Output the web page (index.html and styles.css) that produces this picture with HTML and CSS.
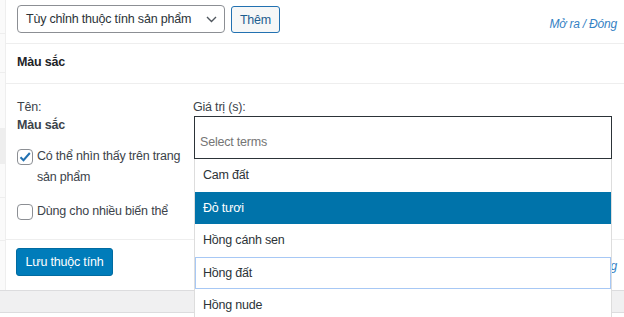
FILE: index.html
```html
<!DOCTYPE html>
<html lang="vi">
<head>
  <meta charset="UTF-8">
  <title>Thuộc tính sản phẩm</title>
  <link rel="stylesheet" href="styles.css">
</head>
<body>

<div class="meta">
  <ul class="tabs">
    <li style="height:33px"></li>
    <li style="height:38px"></li>
    <li style="height:55px"></li>
    <li class="active" style="height:34px"></li>
    <li style="height:33px"></li>
    <li style="height:42px"></li>
  </ul>

  <div class="panel">
    <div class="toolbar">
      <div class="fake-select">
        <span>Tùy chỉnh thuộc tính sản phẩm</span>
        <svg width="11" height="7" viewBox="0 0 11 7"><path d="M1 1l4.5 4.5L10 1" fill="none" stroke="#50575e" stroke-width="1.4"/></svg>
      </div>
      <button class="btn">Thêm</button>
      <a class="toggle" href="#">Mở ra / Đóng</a>
    </div>

    <div class="attr">
      <h3 class="attr-head">Màu sắc</h3>
      <div class="attr-body">
        <div class="col-name">
          <div class="label">Tên:</div>
          <div class="name">Màu sắc</div>
          <label class="opt">
            <span class="check checked"><svg width="14" height="14" viewBox="0 0 14 14"><path d="M2.5 7.2l3 3L11.8 3" fill="none" stroke="#2271b1" stroke-width="2"/></svg></span>
            <span>Có thể nhìn thấy trên trang sản phẩm</span>
          </label>
          <label class="opt">
            <span class="check"></span>
            <span>Dùng cho nhiều biến thể</span>
          </label>
        </div>
        <div class="col-values">
          <div class="label">Giá trị (s):</div>
          <div class="terms">
            <div class="terms-box">Select terms</div>
            <ul class="dropdown">
              <li>Cam đất</li>
              <li class="hl">Đỏ tươi</li>
              <li>Hồng cánh sen</li>
              <li class="focus">Hồng đất</li>
              <li>Hồng nude</li>
            </ul>
          </div>
        </div>
      </div>
    </div>

    <div class="attr-foot">
      <button class="btn-primary">Lưu thuộc tính</button>
      <a class="toggle" href="#">Mở ra / Đóng</a>
    </div>
  </div>
</div>

<div class="band"></div>
<div class="next"></div>

</body>
</html>
```

FILE: styles.css
```css
body {
  margin: 0;
  background: #fff;
  font-family: "Liberation Sans", Arial, sans-serif;
  font-size: 12.5px;
  letter-spacing: -0.2px;
  color: #3c434a;
}

.meta {
  display: flex;
  height: 290px;
  border-bottom: 1px solid #dcdcde;
}

.tabs {
  width: 5px;
  margin: 0;
  padding: 0;
  list-style: none;
  background: #fafafa;
  border-right: 1px solid #eee;
}

.tabs li {
  border-bottom: 1px solid #eee;
}

.tabs li.active {
  background: #eee;
}

.panel {
  flex: 1;
  min-width: 0;
}

.toolbar {
  display: flex;
  align-items: flex-start;
  gap: 6px;
  height: 38px;
  padding: 5px 7px 0 11px;
  border-bottom: 1px solid #eee;
}

.fake-select {
  display: flex;
  align-items: center;
  justify-content: space-between;
  box-sizing: border-box;
  width: 208px;
  height: 28px;
  padding: 0 7px 0 8px;
  border: 1px solid #8c8f94;
  border-radius: 4px;
  white-space: nowrap;
  color: #2c3338;
}

.btn {
  box-sizing: border-box;
  width: 49px;
  height: 27px;
  margin-top: 1px;
  padding: 0;
  background: #f6f7f7;
  border: 1px solid #2271b1;
  border-radius: 3px;
  color: #1d5d8f;
  font-family: inherit;
  font-size: 12.5px;
  letter-spacing: inherit;
}

.toggle {
  margin-left: auto;
  align-self: center;
  color: #3582c4;
  font-size: 12px;
  font-style: italic;
  text-decoration: none;
}

.attr-head {
  margin: 0;
  height: 39px;
  line-height: 37px;
  padding: 0 11px;
  font-size: 12.5px;
  font-weight: 700;
  color: #1d2327;
  border-bottom: 1px solid #eee;
}

.attr-body {
  display: flex;
  height: 141px;
  padding: 14px 12px 0 11px;
  border-bottom: 1px solid #eee;
}

.col-name {
  width: 176px;
  line-height: 18px;
}

.name {
  font-weight: 700;
  margin-bottom: 12px;
}

.opt {
  display: flex;
  align-items: flex-start;
  gap: 4px;
  margin-bottom: 13px;
  line-height: 21px;
}

.check {
  flex: none;
  box-sizing: border-box;
  width: 16px;
  height: 16px;
  margin-top: 3px;
  border: 1px solid #8c8f94;
  border-radius: 4px;
  display: flex;
  align-items: center;
  justify-content: center;
}

.col-values {
  flex: 1;
  line-height: 18px;
}

.terms {
  position: relative;
}

.terms-box {
  box-sizing: border-box;
  height: 43px;
  margin-left: 1px;
  padding: 16px 5px 0;
  border: 1px solid #2c3338;
  color: #757575;
}

.dropdown {
  position: absolute;
  top: 100%;
  left: 1px;
  right: 0;
  z-index: 2;
  margin: 0;
  padding: 0;
  list-style: none;
  background: #fff;
  border-left: 1px solid #ddd;
  border-right: 1px solid #ddd;
}

.dropdown li {
  box-sizing: border-box;
  height: 32.5px;
  line-height: 32px;
  padding: 0 8px;
  color: #2c3338;
}

.dropdown li.hl {
  background: #0073aa;
  color: #fff;
}

.dropdown li.focus {
  border: 1px solid #a7c8f5;
  padding: 0 7px;
  line-height: 30px;
}

.attr-foot {
  display: flex;
  align-items: flex-start;
  padding: 8px 7px 0 10px;
}

.attr-foot .toggle {
  margin-top: 7px;
}

.btn-primary {
  box-sizing: border-box;
  width: 97px;
  height: 28px;
  padding: 0;
  background: #007cba;
  border: 1px solid #006ba1;
  border-radius: 3px;
  color: #fff;
  font-family: inherit;
  font-size: 12.5px;
  letter-spacing: inherit;
}

.band {
  height: 21px;
  background: #f0f0f1;
}

.next {
  height: 10px;
  border-top: 1px solid #dcdcde;
}
```
